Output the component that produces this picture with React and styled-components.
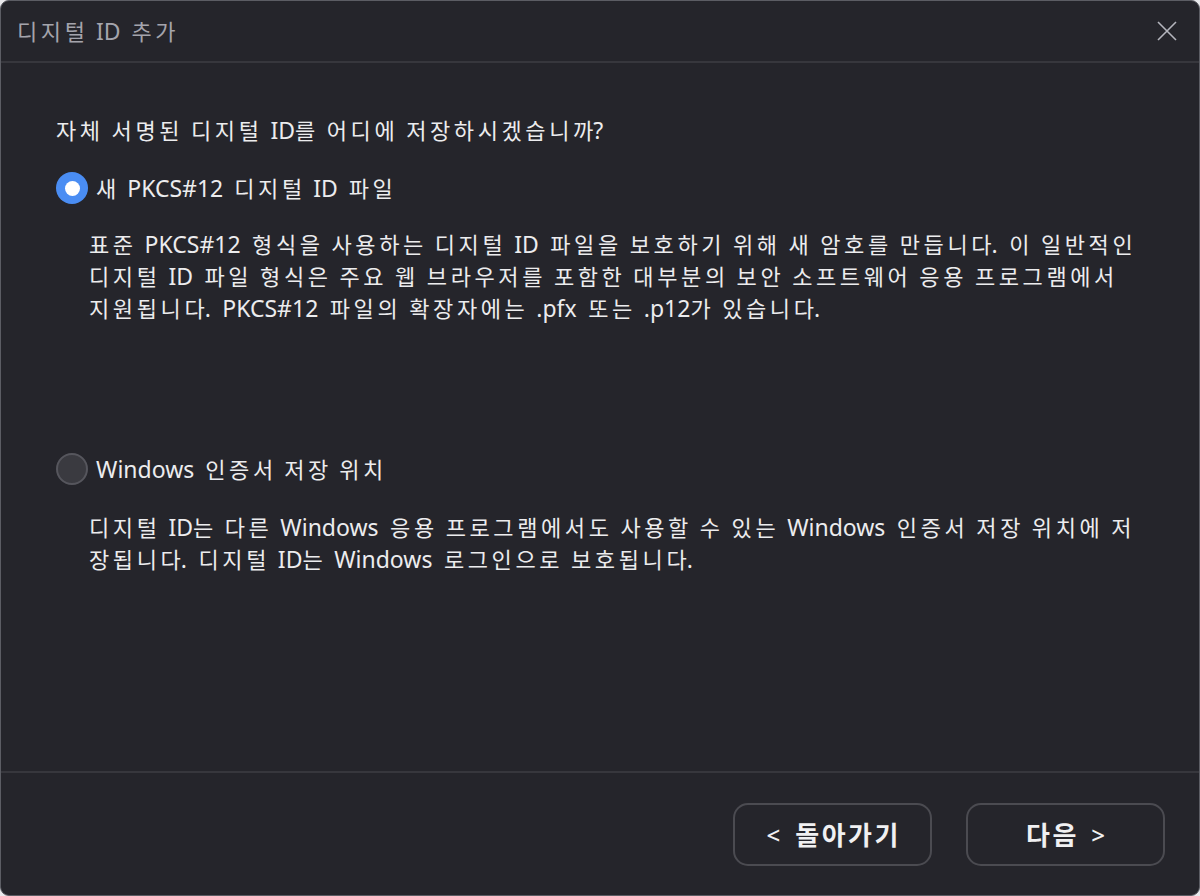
import React from 'react';
import styled, { createGlobalStyle } from 'styled-components';

const GlobalStyle = createGlobalStyle`
  html, body {
    margin: 0;
    padding: 0;
    background: #e9e9ec;
  }
  body {
    font-family: "Noto Sans", "Noto Sans CJK KR", sans-serif;
  }
`;

const Dialog = styled.div`
  width: 1200px;
  height: 896px;
  box-sizing: border-box;
  background: #25252b;
  border: 1px solid #5c5d64;
  border-radius: 9px;
  display: flex;
  flex-direction: column;
  overflow: hidden;
  color: #ececee;
`;

const TitleBar = styled.header`
  height: 60px;
  flex: none;
  display: flex;
  align-items: center;
  justify-content: space-between;
  padding: 0 14px 0 16px;
  border-bottom: 2px solid #37373d;
`;

const Title = styled.h1`
  margin: 0;
  font-size: 23px;
  font-weight: 400;
  word-spacing: 5px;
  line-height: 32px;
  white-space: nowrap;
  color: #a4a4ac;
`;

const CloseButton = styled.button`
  width: 36px;
  height: 36px;
  padding: 0;
  border: none;
  background: none;
  display: flex;
  align-items: center;
  justify-content: center;
  cursor: pointer;
`;

const Body = styled.main`
  flex: 1;
  padding: 51px 0 0 55px;
  display: flex;
  flex-direction: column;
`;

const Question = styled.p`
  margin: 0 0 26px;
  font-size: 23px;
  word-spacing: 5.5px;
  line-height: 32px;
  white-space: nowrap;
`;

const Option = styled.section`
  display: flex;
  flex-direction: column;
  margin-bottom: ${(p) => p.$gap}px;
`;

const OptionRow = styled.label`
  display: flex;
  align-items: center;
  gap: 8px;
  font-size: 23px;
  word-spacing: 5px;
  line-height: 32px;
  white-space: nowrap;
  cursor: pointer;
`;

const Radio = styled.span`
  width: 32px;
  height: 32px;
  box-sizing: border-box;
  border-radius: 50%;
  flex: none;
  display: flex;
  align-items: center;
  justify-content: center;
  background: ${(p) => (p.$checked ? '#4a8df3' : '#3a3a40')};
  border: ${(p) => (p.$checked ? 'none' : '2px solid #56565d')};

  &::after {
    content: '';
    display: ${(p) => (p.$checked ? 'block' : 'none')};
    width: 15px;
    height: 15px;
    border-radius: 50%;
    background: #ffffff;
  }
`;

const Description = styled.p`
  margin: ${(p) => p.$top}px 0 0 33px;
  font-size: 23px;
  word-spacing: 5.5px;
  line-height: 32px;
  white-space: nowrap;
`;

const Hangul = styled.span`
  font-size: ${(p) => p.$size}px;
  letter-spacing: ${(p) => p.$spacing}px;
`;

// last syllable of a run gets no extra spacing, so gaps after Hangul match gaps after Latin
const HangulTail = styled.span`
  letter-spacing: 0;
`;

const Footer = styled.footer`
  height: 124px;
  flex: none;
  border-top: 2px solid #37373d;
  display: flex;
  align-items: center;
  justify-content: flex-end;
  gap: 34px;
  padding: 0 34px 0 0;
  box-sizing: border-box;
`;

const Button = styled.button`
  width: 199px;
  height: 63px;
  box-sizing: border-box;
  border: 2px solid #4b4b51;
  border-radius: 15px;
  background: #25252b;
  color: #f0f0f2;
  font-family: "Noto Sans", "Noto Sans CJK KR", sans-serif;
  font-size: 24px;
  font-weight: 700;
  white-space: nowrap;
  display: flex;
  align-items: center;
  justify-content: center;
  gap: 15px;
  cursor: pointer;
`;

const Chevron = styled.span`
  font-weight: 500;
  font-size: 24px;
`;

// Malgun Gothic sets Hangul wider than Noto; space out Hangul runs only
const kr = (text, size = 22, spacing = 3.6) =>
  text.split(/([\uAC00-\uD7A3]+)/).map((part, i) =>
    /[\uAC00-\uD7A3]/.test(part) ? (
      <Hangul key={i} $size={size} $spacing={spacing}>
        {part.slice(0, -1)}
        <HangulTail>{part.slice(-1)}</HangulTail>
      </Hangul>
    ) : (
      part
    )
  );

const lines = (list) =>
  list.map((line, i) => (
    <React.Fragment key={i}>
      {i > 0 && <br />}
      {kr(line)}
    </React.Fragment>
  ));

const options = [
  {
    label: '새 PKCS#12 디지털 ID 파일',
    checked: true,
    gap: 129,
    top: 24,
    text: [
      '표준 PKCS#12 형식을 사용하는 디지털 ID 파일을 보호하기 위해 새 암호를 만듭니다. 이 일반적인',
      '디지털 ID 파일 형식은 주요 웹 브라우저를 포함한 대부분의 보안 소프트웨어 응용 프로그램에서',
      '지원됩니다. PKCS#12 파일의 확장자에는 .pfx 또는 .p12가 있습니다.',
    ],
  },
  {
    label: 'Windows 인증서 저장 위치',
    checked: false,
    gap: 0,
    top: 26,
    text: [
      '디지털 ID는 다른 Windows 응용 프로그램에서도 사용할 수 있는 Windows 인증서 저장 위치에 저',
      '장됩니다. 디지털 ID는 Windows 로그인으로 보호됩니다.',
    ],
  },
];

const App = () => {
  return (
    <>
      <GlobalStyle />
      <Dialog>
        <TitleBar>
          <Title>{kr('디지털 ID 추가')}</Title>
          <CloseButton aria-label="닫기">
            <svg width="22" height="22" viewBox="0 0 22 22">
              <path d="M2 2 L20 20 M20 2 L2 20" stroke="#b4b5bd" strokeWidth="1.6" fill="none" />
            </svg>
          </CloseButton>
        </TitleBar>
        <Body>
          <Question>{kr('자체 서명된 디지털 ID를 어디에 저장하시겠습니까?')}</Question>
          {options.map((option) => (
            <Option key={option.label} $gap={option.gap}>
              <OptionRow>
                <Radio $checked={option.checked} />
                <span>{kr(option.label)}</span>
              </OptionRow>
              <Description $top={option.top}>{lines(option.text)}</Description>
            </Option>
          ))}
        </Body>
        <Footer>
          <Button>
            <Chevron>&lt;</Chevron>
            {kr('돌아가기', 26, 2.5)}
          </Button>
          <Button>
            {kr('다음', 26, 2.5)}
            <Chevron>&gt;</Chevron>
          </Button>
        </Footer>
      </Dialog>
    </>
  );
};

export default App;
